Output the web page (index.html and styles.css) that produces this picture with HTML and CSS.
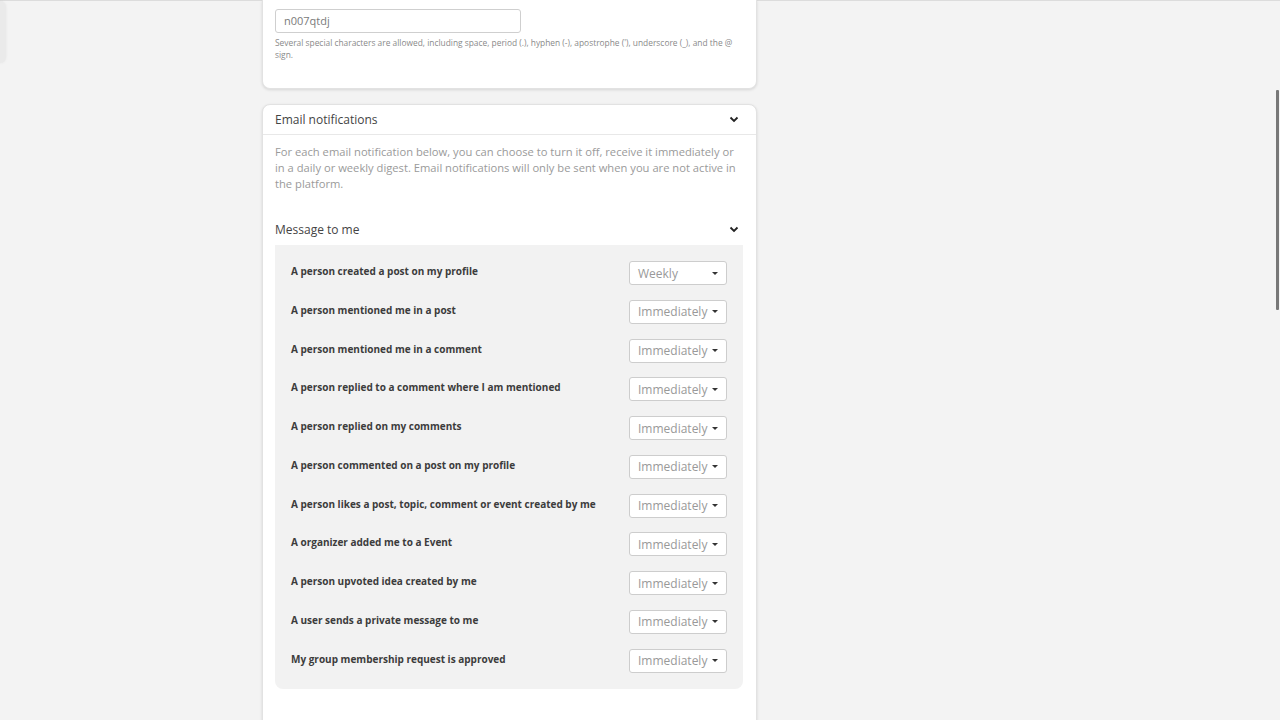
FILE: index.html
```html
<!DOCTYPE html>
<html lang="en">
<head>
<meta charset="utf-8">
<title>Settings</title>
<link rel="stylesheet" href="styles.css">
</head>
<body>
<div class="topline"></div>
<div class="side-ghost"></div>
<main class="column">
  <section class="card card-profile">
    <div class="field">
      <div class="input">n007qtdj</div>
      <p class="help">Several special characters are allowed, including space, period (.), hyphen (-), apostrophe ('), underscore (_), and the @ sign.</p>
    </div>
  </section>

  <section class="card card-email">
    <header class="card-head">
      <span>Email notifications</span>
      <svg class="chev" width="10" height="7" viewBox="0 0 10 7"><path d="M1.5 1.5 L5 5 L8.5 1.5" fill="none" stroke="#222" stroke-width="1.8"/></svg>
    </header>
    <div class="card-body">
      <p class="desc">For each email notification below, you can choose to turn it off, receive it immediately or in a daily or weekly digest. Email notifications will only be sent when you are not active in the platform.</p>
      <div class="sub-head">
        <span>Message to me</span>
        <svg class="chev" width="10" height="7" viewBox="0 0 10 7"><path d="M1.5 1.5 L5 5 L8.5 1.5" fill="none" stroke="#222" stroke-width="1.8"/></svg>
      </div>
      <div class="panel">
        <div class="row"><span class="label">A person created a post on my profile</span><div class="select"><span>Weekly</span><i class="caret"></i></div></div>
        <div class="row"><span class="label">A person mentioned me in a post</span><div class="select"><span>Immediately</span><i class="caret"></i></div></div>
        <div class="row"><span class="label">A person mentioned me in a comment</span><div class="select"><span>Immediately</span><i class="caret"></i></div></div>
        <div class="row"><span class="label">A person replied to a comment where I am mentioned</span><div class="select"><span>Immediately</span><i class="caret"></i></div></div>
        <div class="row"><span class="label">A person replied on my comments</span><div class="select"><span>Immediately</span><i class="caret"></i></div></div>
        <div class="row"><span class="label">A person commented on a post on my profile</span><div class="select"><span>Immediately</span><i class="caret"></i></div></div>
        <div class="row"><span class="label">A person likes a post, topic, comment or event created by me</span><div class="select"><span>Immediately</span><i class="caret"></i></div></div>
        <div class="row"><span class="label">A organizer added me to a Event</span><div class="select"><span>Immediately</span><i class="caret"></i></div></div>
        <div class="row"><span class="label">A person upvoted idea created by me</span><div class="select"><span>Immediately</span><i class="caret"></i></div></div>
        <div class="row"><span class="label">A user sends a private message to me</span><div class="select"><span>Immediately</span><i class="caret"></i></div></div>
        <div class="row"><span class="label">My group membership request is approved</span><div class="select"><span>Immediately</span><i class="caret"></i></div></div>
      </div>
    </div>
  </section>
</main>
<div class="scrollbar"></div>
</body>
</html>
```
FILE: styles.css
```css
html, body {
  margin: 0;
  padding: 0;
  height: 720px;
  overflow: hidden;
}
body {
  background: #f3f3f3;
  font-family: "Open Sans", "Noto Sans", sans-serif;
  color: #444;
  position: relative;
}
.topline {
  height: 1px;
  background: #dcdcdc;
}
.side-ghost {
  position: absolute;
  left: -12px;
  top: 1px;
  width: 18px;
  height: 62px;
  border-radius: 6px;
  background: #eaeaea;
  box-shadow: 0 0 3px rgba(0,0,0,0.06);
}
.column {
  width: 495px;
  margin-left: 262px;
  display: flex;
  flex-direction: column;
  gap: 15px;
  margin-top: -1px;
}
.card {
  background: #fff;
  border: 1px solid #e2e2e2;
  border-radius: 8px;
  box-shadow: 0 1px 3px rgba(0,0,0,0.12);
}
.card-profile {
  border-top-left-radius: 0;
  border-top-right-radius: 0;
  border-top: none;
  padding: 9px 12px 21px 12px;
  height: 58px;
}
.input {
  width: 228px;
  height: 22px;
  border: 1px solid #cfcfcf;
  border-radius: 3px;
  padding: 0 8px;
  font-size: 11px;
  line-height: 22px;
  color: #7a7a7a;
}
.help {
  margin: 4px 0 0 0;
  font-size: 8.4px;
  line-height: 12px;
  color: #8a8a8a;
}
.card-email {
  min-height: 700px;
}
.card-head {
  height: 29px;
  display: flex;
  align-items: center;
  justify-content: space-between;
  padding: 0 17px 0 12px;
  border-bottom: 1px solid #e8e8e8;
  font-size: 12px;
  color: #444;
}
.chev { display: block; }
.card-body {
  padding: 9px 13px 0 12px;
}
.desc {
  margin: 0;
  font-size: 11.2px;
  line-height: 16px;
  color: #9a9a9a;
}
.sub-head {
  height: 30px;
  margin-top: 22px;
  display: flex;
  align-items: center;
  justify-content: space-between;
  padding-right: 4px;
  font-size: 12px;
  color: #444;
}
.panel {
  margin-top: 1px;
  background: #f2f2f2;
  border-radius: 0 0 8px 8px;
  padding: 16px 16px 16px 16px;
  display: flex;
  flex-direction: column;
}
.row {
  height: 38.75px;
  display: flex;
  justify-content: space-between;
  align-items: flex-start;
}
.row:last-child { height: 24px; }
.label {
  font-size: 10px;
  font-weight: 700;
  color: #3c3c3c;
  padding-top: 3px;
}
.select {
  width: 96px;
  height: 22px;
  box-sizing: content-box;
  border: 1px solid #cdcdcd;
  border-radius: 3px;
  background: #fff;
  display: flex;
  align-items: center;
  justify-content: space-between;
  font-size: 12px;
  color: #999;
}
.select span { padding-left: 8px; }
.caret {
  width: 0;
  height: 0;
  border-left: 3px solid transparent;
  border-right: 3px solid transparent;
  border-top: 3px solid #333;
  margin-right: 8px;
}
.scrollbar {
  position: absolute;
  right: 1px;
  top: 90px;
  width: 3px;
  height: 220px;
  background: #777;
  border-radius: 1px;
}
```
